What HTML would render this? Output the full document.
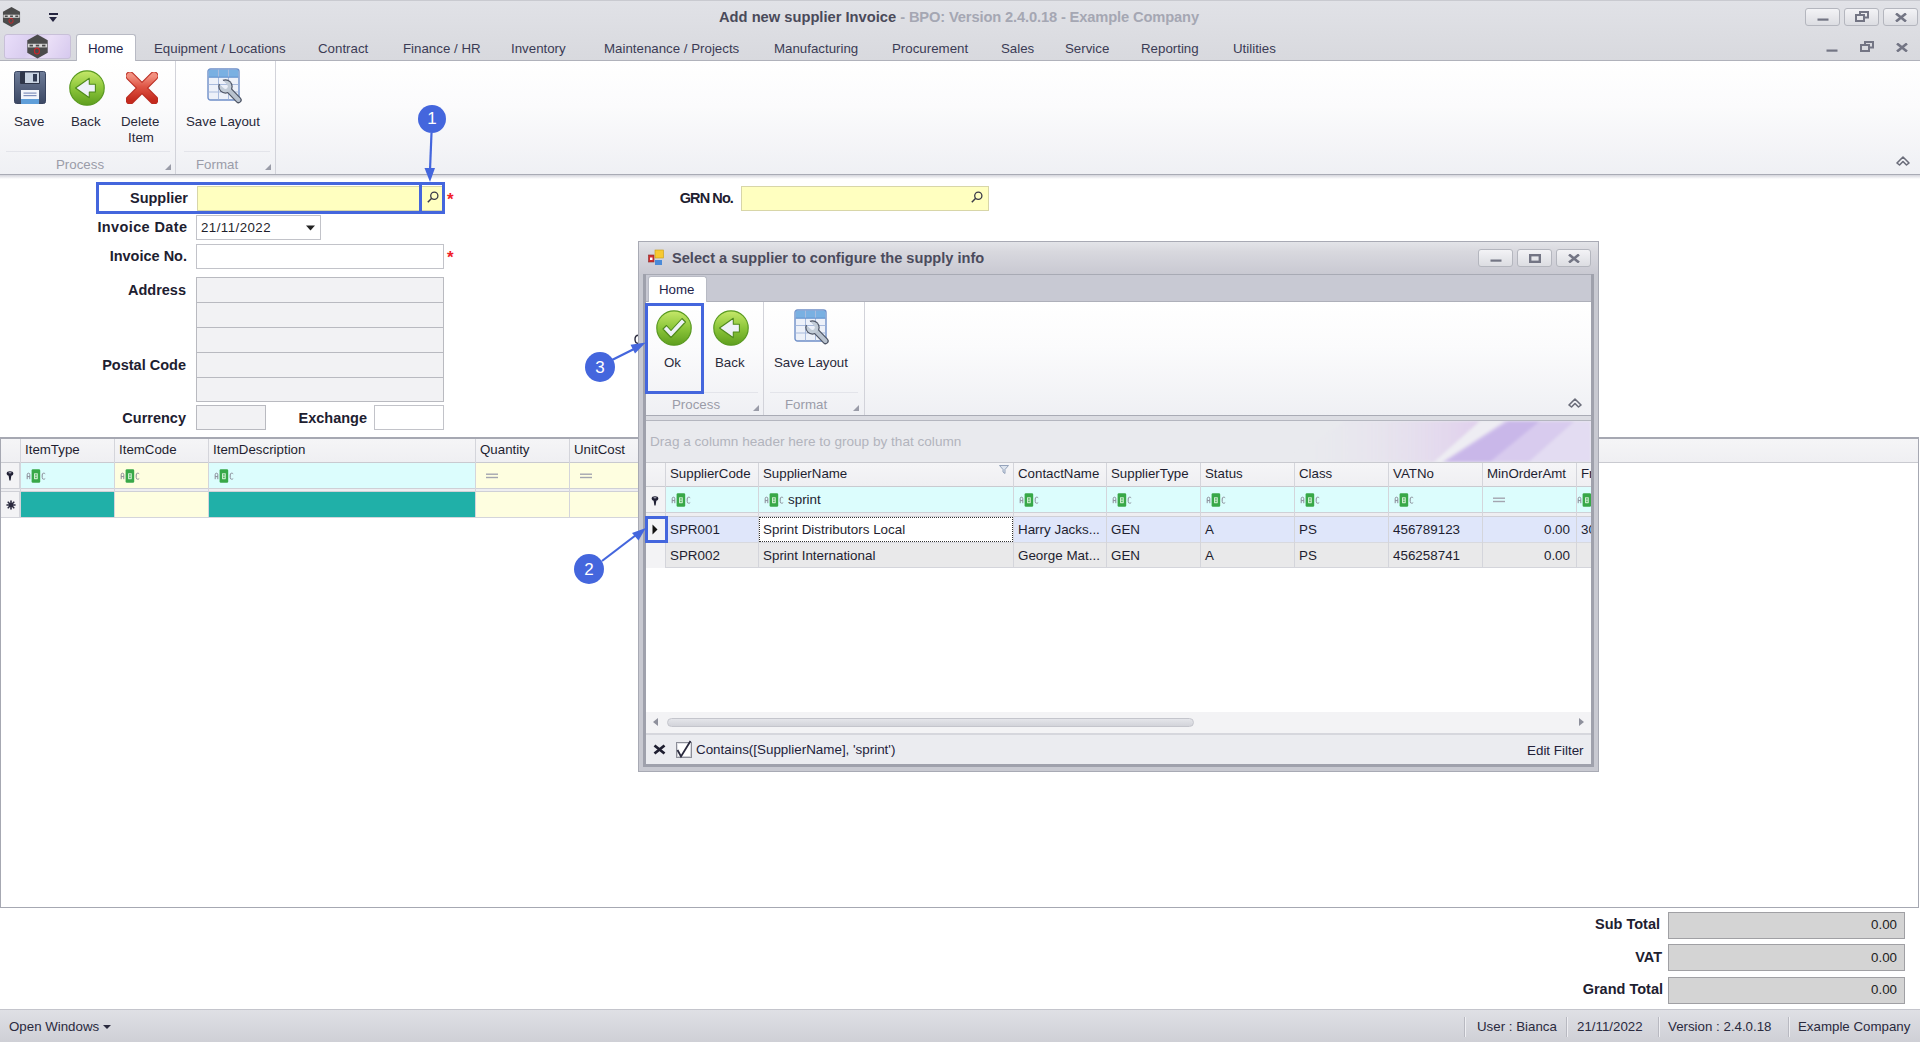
<!DOCTYPE html>
<html><head><meta charset="utf-8">
<style>
*{box-sizing:border-box;margin:0;padding:0}
html,body{width:1920px;height:1042px;overflow:hidden;background:#fff;font-family:"Liberation Sans",sans-serif;color:#1e1e2a}
.a{position:absolute}
.t{position:absolute;white-space:nowrap;line-height:1}
#title{left:0;top:0;width:1920px;height:60px;background:linear-gradient(#e1e2e7,#d8d9de)}
.wb{position:absolute;top:8px;width:35px;height:18px;border:1px solid #b4b6be;border-radius:3px;background:linear-gradient(#f3f3f6,#dcdde2)}
.tab{position:absolute;top:0;font-size:13.3px;color:#3b3b55}
#ribbon{left:0;top:61px;width:1920px;height:113px;background:linear-gradient(#ffffff 0%,#fbfbfc 40%,#eff0f4 100%)}
.rbt{position:absolute;font-size:13.3px;color:#2a2a3a;text-align:center}
.glab{position:absolute;font-size:13.3px;color:#9a9ca8}
.lbl{position:absolute;font-weight:bold;font-size:14.5px;color:#1d2030;text-align:right}
.inp{position:absolute;border:1px solid #c2c3c9;background:#fff}
.inpg{position:absolute;border:1px solid #b9bac0;background:#f2f2f4}
.ast{position:absolute;color:#f0202a;font-size:17px;font-weight:bold}
.tot{left:1668px;width:237px;height:27px;background:#d4d4d4;border:1px solid #a0a0a4}
.totv{right:23px;font-size:13.3px;color:#222}
.sb{font-size:13.3px;color:#2a2a3e}
.sep{position:absolute;top:1017px;width:1px;height:20px;background:#b8b9c1;box-shadow:1px 0 0 #eeeef2}
.gh{font-size:13.3px;color:#1e1e30}
.gc{font-size:13.4px;color:#1e1e30}
</style></head><body>
<svg width="0" height="0" style="position:absolute">
<defs>
  <linearGradient id="gGreen" x1="0" y1="0" x2="0" y2="1"><stop offset="0" stop-color="#c6e86a"/><stop offset="0.5" stop-color="#8cc63a"/><stop offset="1" stop-color="#5e9e1e"/></linearGradient>
  <linearGradient id="gRed" x1="0" y1="0" x2="0" y2="1"><stop offset="0" stop-color="#f29080"/><stop offset="0.45" stop-color="#de5444"/><stop offset="1" stop-color="#c42a1e"/></linearGradient>
  <linearGradient id="gDisk" x1="0" y1="0" x2="0" y2="1"><stop offset="0" stop-color="#6e7c98"/><stop offset="1" stop-color="#3c4864"/></linearGradient>
  <linearGradient id="gHex" x1="0" y1="0" x2="0" y2="1"><stop offset="0" stop-color="#6a6a6a"/><stop offset="1" stop-color="#333"/></linearGradient>
  <symbol id="abc" viewBox="0 0 20 14">
    <path d="M1.2,10.2 V5.6 Q1.2,4.2 2.5,4.2 Q3.8,4.2 3.8,5.6 V10.2 M1.2,7.6 H3.8" fill="none" stroke="#8a8c98" stroke-width="1"/>
    <rect x="5.6" y="0.2" width="8.6" height="13.6" rx="1.3" fill="#38a848"/>
    <rect x="8" y="4.2" width="3.8" height="6" rx="0.4" fill="#cdeccf"/>
    <rect x="9" y="5.2" width="1.8" height="1.5" fill="#5cb868"/>
    <rect x="9" y="7.6" width="1.8" height="1.5" fill="#5cb868"/>
    <path d="M19.2,4.8 Q18.6,4.2 17.6,4.2 Q16.2,4.2 16.2,6 V8.4 Q16.2,10.2 17.6,10.2 Q18.6,10.2 19.2,9.6" fill="none" stroke="#8a8c98" stroke-width="1"/>
  </symbol>
  <symbol id="pin" viewBox="0 0 8 10">
    <ellipse cx="4" cy="2.6" rx="3.3" ry="2.4" fill="#1f1f33"/>
    <ellipse cx="4" cy="1.7" rx="1.6" ry="0.7" fill="#9a9aaa"/>
    <path d="M2.6,4.5 L5.4,4.5 L4.6,9.5 L3.4,9.5 Z" fill="#1f1f33"/>
  </symbol>
  <symbol id="eq" viewBox="0 0 12 6"><rect x="0" y="0.5" width="12" height="1.4" fill="#a3a5b0"/><rect x="0" y="3.8" width="12" height="1.4" fill="#a3a5b0"/></symbol>
  <symbol id="wmin" viewBox="0 0 12 3"><rect x="0.5" y="0.5" width="11" height="2.2" fill="#737584"/></symbol>
  <symbol id="wrest" viewBox="0 0 14 11"><path d="M5,4 V1 H13 V6.5 H9.5" fill="none" stroke="#737584" stroke-width="2"/><rect x="1" y="4" width="8" height="6" fill="none" stroke="#737584" stroke-width="2"/></symbol>
  <symbol id="wclose" viewBox="0 0 12 9"><path d="M1,0.5 L11,8.5 M11,0.5 L1,8.5" stroke="#737584" stroke-width="2.6"/></symbol>
  <symbol id="wmax" viewBox="0 0 12 9"><rect x="1.2" y="1.2" width="9.6" height="6.6" fill="none" stroke="#737584" stroke-width="2.4"/></symbol>
  <symbol id="search" viewBox="0 0 12 12"><circle cx="7.3" cy="4.7" r="3.6" fill="none" stroke="#3a3a48" stroke-width="1.3"/><path d="M4.7,7.3 L0.8,11.2" stroke="#3a3a48" stroke-width="1.5"/></symbol>
  <symbol id="chev" viewBox="0 0 16 12"><path d="M2,9 L8,3 L14,9 L11.5,11 L8,7.5 L4.5,11 Z" fill="none" stroke="#6b6d7a" stroke-width="1.6" stroke-linejoin="round"/></symbol>
  <symbol id="launch" viewBox="0 0 7 7"><path d="M7,0 L7,7 L0,7 Z" fill="#9a9ca8"/></symbol>
  <symbol id="disk" viewBox="0 0 32 33">
    <rect x="0.5" y="0.5" width="31" height="32" rx="2" fill="url(#gDisk)" stroke="#3a4560" stroke-width="1"/>
    <rect x="6" y="0.5" width="20" height="12.5" rx="1" fill="#2e364a"/>
    <rect x="11" y="1.5" width="14" height="10.5" fill="#c9d4e3"/>
    <rect x="19" y="3" width="4" height="7.5" fill="#303a52"/>
    <rect x="7" y="19" width="18" height="14" fill="#f4f6fa"/>
    <rect x="7" y="28" width="18" height="5" fill="#5f9ed9"/>
    <rect x="9.5" y="21.5" width="13" height="1.2" fill="#8090bb"/>
    <rect x="9.5" y="24" width="13" height="1.2" fill="#8090bb"/>
  </symbol>
  <symbol id="back" viewBox="0 0 36 36">
    <circle cx="18" cy="18" r="17.2" fill="url(#gGreen)" stroke="#5a9a22" stroke-width="1.2"/>
    <path d="M6.5,18 L20.3,8.3 V14.2 H26.4 V22 H20.3 V27.8 Z" fill="#eef2f8" stroke="#4f8a1c" stroke-width="1.1" stroke-linejoin="round"/>
  </symbol>
  <symbol id="ok" viewBox="0 0 36 36">
    <circle cx="18" cy="18" r="17.2" fill="url(#gGreen)" stroke="#5a9a22" stroke-width="1.2"/>
    <path d="M7,19 L10.5,15.5 L15,20.5 L26,8.5 L29.5,12 L15,27.5 Z" fill="#eef2f8" stroke="#4f8a1c" stroke-width="1.1" stroke-linejoin="round"/>
  </symbol>
  <symbol id="del" viewBox="0 0 32 32">
    <path d="M4,4 L28,28 M28,4 L4,28" stroke="#b82a20" stroke-width="9" stroke-linecap="round"/>
    <path d="M4,4 L28,28 M28,4 L4,28" stroke="url(#gRed)" stroke-width="7" stroke-linecap="round"/>
  </symbol>
  <symbol id="layout" viewBox="0 0 36 36">
    <rect x="1" y="1" width="31" height="31" rx="2.5" fill="#edf1f9" stroke="#6f8fc8" stroke-width="1.4"/>
    <rect x="1.7" y="1.7" width="29.6" height="7.5" fill="#79b0e2"/>
    <path d="M11.5,1.7 V31.3 M21.5,1.7 V31.3 M1.7,16.5 H31.3 M1.7,24 H31.3" stroke="#a9bbdd" stroke-width="1"/>
    <path d="M1.7,9.2 H31.3" stroke="#5f8fcc" stroke-width="1"/>
    <g mask="url(#wmask)">
      <path d="M18.5,18.5 L31.5,32" stroke="#4f5666" stroke-width="6.4" stroke-linecap="round"/>
      <circle cx="18.5" cy="18.5" r="7.2" fill="#4f5666"/>
      <path d="M18.5,18.5 L31.5,32" stroke="#b9c3cf" stroke-width="4" stroke-linecap="round"/>
      <circle cx="18.5" cy="18.5" r="6" fill="#c2ccd7"/>
    </g>
  </symbol>
  <mask id="wmask" maskUnits="userSpaceOnUse" x="0" y="0" width="36" height="36">
    <rect x="0" y="0" width="36" height="36" fill="#fff"/>
    <path d="M18.5,18.5 L12,12" stroke="#000" stroke-width="4.6" stroke-linecap="round"/>
    <path d="M17.6,17.6 L8,8" stroke="#000" stroke-width="4.6"/>
  </mask>
  <symbol id="hex" viewBox="0 0 20 22">
    <path d="M10,0.5 L19,5.5 V16.5 L10,21.5 L1,16.5 V5.5 Z" fill="url(#hGex)"/>
    <path d="M10,0.5 L19,5.5 V16.5 L10,21.5 L1,16.5 V5.5 Z" fill="#4b4b4b"/>
    <rect x="1.5" y="8.6" width="17" height="3.2" fill="#d8d8d8"/>
    <rect x="3" y="9.4" width="3" height="1.6" fill="#4b4b4b"/><rect x="8.5" y="9.4" width="3" height="1.6" fill="#4b4b4b"/><rect x="14" y="9.4" width="3" height="1.6" fill="#4b4b4b"/>
    <ellipse cx="9.5" cy="15" rx="2.2" ry="2.6" fill="none" stroke="#c8262a" stroke-width="1"/>
  </symbol>
</defs>
</svg>


<!-- title bar + tabs -->
<div id="title" class="a"></div>
<div class="a" style="left:0;top:0;width:1920px;height:1px;background:#c9cad0"></div>
<div class="a" style="left:0;top:60px;width:1920px;height:1px;background:#b0b2bb"></div>

<div class="t" style="left:719px;top:10px;font-size:14.7px;font-weight:bold;color:#4a4a5a">Add new supplier Invoice <span style="color:#a5a7b3;font-weight:bold;letter-spacing:-0.14px">- BPO: Version 2.4.0.18 - Example Company</span></div>

<div class="wb" style="left:1805px"></div>
<div class="wb" style="left:1844px"></div>
<div class="wb" style="left:1883px"></div>

<!-- tab strip -->
<div class="a" style="left:4px;top:34px;width:67px;height:25px;border:1px solid #c8c0d8;border-radius:3px;background:linear-gradient(120deg,#e9defa,#d9cdef 40%,#eadff7 60%,#d6c9ee)"></div>
<div class="a" style="left:76px;top:34px;width:60px;height:27px;background:#fff;border:1px solid #b8bac4;border-bottom:none;border-radius:3px 3px 0 0"></div>
<div class="t tab" style="left:88px;top:42px;color:#23234a">Home</div>
<div class="t tab" style="left:154px;top:42px">Equipment / Locations</div>
<div class="t tab" style="left:318px;top:42px">Contract</div>
<div class="t tab" style="left:403px;top:42px">Finance / HR</div>
<div class="t tab" style="left:511px;top:42px">Inventory</div>
<div class="t tab" style="left:604px;top:42px">Maintenance / Projects</div>
<div class="t tab" style="left:774px;top:42px">Manufacturing</div>
<div class="t tab" style="left:892px;top:42px">Procurement</div>
<div class="t tab" style="left:1001px;top:42px">Sales</div>
<div class="t tab" style="left:1065px;top:42px">Service</div>
<div class="t tab" style="left:1141px;top:42px">Reporting</div>
<div class="t tab" style="left:1233px;top:42px">Utilities</div>

<!-- ribbon -->
<div id="ribbon" class="a"></div>
<div class="a" style="left:0;top:174px;width:1920px;height:1px;background:#a9abb5"></div>
<div class="a" style="left:0;top:175px;width:1920px;height:4px;background:linear-gradient(#d4d5dc,#ffffff)"></div>
<div class="a" style="left:175px;top:61px;width:1px;height:113px;background:#d2d3da"></div>
<div class="a" style="left:275px;top:61px;width:1px;height:113px;background:#d2d3da"></div>
<div class="a" style="left:6px;top:151px;width:164px;height:1px;background:#e3e4ea"></div>
<div class="a" style="left:184px;top:151px;width:86px;height:1px;background:#e3e4ea"></div>

<div class="t rbt" style="left:14px;top:115px">Save</div>
<div class="t rbt" style="left:71px;top:115px">Back</div>
<div class="t rbt" style="left:121px;top:115px">Delete</div>
<div class="t rbt" style="left:128px;top:131px">Item</div>
<div class="t rbt" style="left:186px;top:115px">Save Layout</div>
<div class="t glab" style="left:56px;top:158px">Process</div>
<div class="t glab" style="left:196px;top:158px">Format</div>

<!-- form -->
<div class="t lbl" style="right:1732px;top:191px">Supplier</div>
<div class="t lbl" style="right:1733px;top:220px;letter-spacing:0.38px;margin-right:-0.38px">Invoice Date</div>
<div class="t lbl" style="right:1733px;top:249px">Invoice No.</div>
<div class="t lbl" style="right:1734px;top:283px">Address</div>
<div class="t lbl" style="right:1734px;top:358px">Postal Code</div>
<div class="t lbl" style="right:1734px;top:411px">Currency</div>
<div class="t lbl" style="right:1553px;top:411px">Exchange</div>
<div class="t lbl" style="right:1187px;top:191px;letter-spacing:-0.9px">GRN No.</div>

<div class="inp" style="left:197px;top:186px;width:246px;height:25px;background:#ffffc0;border-color:#d8d6a8"></div>
<div class="inp" style="left:196px;top:215px;width:125px;height:25px"></div>
<div class="t" style="left:201px;top:221px;font-size:13.3px;letter-spacing:0.45px">21/11/2022</div>
<div class="inp" style="left:196px;top:244px;width:248px;height:25px"></div>
<div class="inpg" style="left:196px;top:277px;width:248px;height:26px"></div>
<div class="inpg" style="left:196px;top:302px;width:248px;height:26px"></div>
<div class="inpg" style="left:196px;top:327px;width:248px;height:26px"></div>
<div class="inpg" style="left:196px;top:352px;width:248px;height:26px"></div>
<div class="inpg" style="left:196px;top:377px;width:248px;height:25px"></div>
<div class="inpg" style="left:196px;top:405px;width:70px;height:25px"></div>
<div class="inp" style="left:374px;top:405px;width:70px;height:25px"></div>
<div class="inp" style="left:741px;top:186px;width:248px;height:25px;background:#ffffc0;border-color:#d8d6a8"></div>
<div class="ast" style="left:447px;top:189.5px">*</div>
<div class="ast" style="left:447px;top:247.5px">*</div>


<!-- main grid -->
<div class="a" style="left:0;top:437px;width:1919px;height:471px;border:1px solid #a6a8b2;border-top:2px solid #a6a8b2;background:#fff"></div>
<div class="a" style="left:1px;top:439px;width:1917px;height:24px;background:linear-gradient(#f5f5f7,#efeff2);border-bottom:1px solid #c9cad0"></div>
<div class="a" style="left:1px;top:463px;width:19px;height:25px;background:#f3f3f5;border-right:1px solid #d4d5db"></div>
<div class="a" style="left:1px;top:492px;width:19px;height:26px;background:#f3f3f5;border-right:1px solid #d4d5db"></div>
<div class="a" style="left:1px;top:488px;width:637px;height:4px;background:#eeeef1;border-top:1px solid #cfd0d6;border-bottom:1px solid #cfd0d6"></div>
<div class="a" style="left:1px;top:517px;width:637px;height:1px;background:#d4d5db"></div>
<div class="a" style="left:20px;top:439px;width:1px;height:79px;background:#d4d5db"></div>
<div class="t" style="left:25px;top:443px;font-size:13.3px;color:#1e1e30">ItemType</div>
<div class="a" style="left:21px;top:463px;width:93px;height:25px;background:#dcfdfd"></div>
<div class="a" style="left:21px;top:492px;width:93px;height:25px;background:#20b0a8"></div>
<div class="a" style="left:114px;top:439px;width:1px;height:79px;background:#d4d5db"></div>
<div class="t" style="left:119px;top:443px;font-size:13.3px;color:#1e1e30">ItemCode</div>
<div class="a" style="left:115px;top:463px;width:93px;height:25px;background:#fefee0"></div>
<div class="a" style="left:115px;top:492px;width:93px;height:25px;background:#fefee0"></div>
<div class="a" style="left:208px;top:439px;width:1px;height:79px;background:#d4d5db"></div>
<div class="t" style="left:213px;top:443px;font-size:13.3px;color:#1e1e30">ItemDescription</div>
<div class="a" style="left:209px;top:463px;width:266px;height:25px;background:#dcfdfd"></div>
<div class="a" style="left:209px;top:492px;width:266px;height:25px;background:#20b0a8"></div>
<div class="a" style="left:475px;top:439px;width:1px;height:79px;background:#d4d5db"></div>
<div class="t" style="left:480px;top:443px;font-size:13.3px;color:#1e1e30">Quantity</div>
<div class="a" style="left:476px;top:463px;width:93px;height:25px;background:#fefee0"></div>
<div class="a" style="left:476px;top:492px;width:93px;height:25px;background:#fefee0"></div>
<div class="a" style="left:569px;top:439px;width:1px;height:79px;background:#d4d5db"></div>
<div class="t" style="left:574px;top:443px;font-size:13.3px;color:#1e1e30">UnitCost</div>
<div class="a" style="left:570px;top:463px;width:70px;height:25px;background:#fefee0"></div>
<div class="a" style="left:570px;top:492px;width:70px;height:25px;background:#fefee0"></div>

<!-- totals -->
<div class="t lbl" style="right:260px;top:917px">Sub Total</div>
<div class="t lbl" style="right:258px;top:950px">VAT</div>
<div class="t lbl" style="right:257px;top:982px">Grand Total</div>
<div class="a tot" style="top:912px"></div><div class="t totv" style="top:918px">0.00</div>
<div class="a tot" style="top:944px"></div><div class="t totv" style="top:951px">0.00</div>
<div class="a tot" style="top:977px"></div><div class="t totv" style="top:983px">0.00</div>

<!-- status bar -->
<div class="a" style="left:0;top:1009px;width:1920px;height:33px;background:linear-gradient(#dfe0e5,#cfd0d6);border-top:1px solid #c4c5cc"></div>
<div class="t sb" style="left:9px;top:1020px">Open Windows</div><div class="a" style="left:103px;top:1025px;width:0;height:0;border-left:4px solid transparent;border-right:4px solid transparent;border-top:4px solid #2a2a3e"></div>
<div class="sep" style="left:1464px"></div><div class="sep" style="left:1566px"></div><div class="sep" style="left:1658px"></div><div class="sep" style="left:1788px"></div>
<div class="t sb" style="left:1477px;top:1020px">User : Bianca</div>
<div class="t sb" style="left:1577px;top:1020px">21/11/2022</div>
<div class="t sb" style="left:1668px;top:1020px">Version : 2.4.0.18</div>
<div class="t sb" style="left:1798px;top:1020px">Example Company</div>

<svg class="a" style="left:633px;top:334px" width="6" height="11"><path d="M5.5,1.2 Q2,1.2 2,5.3 Q2,9.5 5.5,9.5" fill="none" stroke="#2a2a3e" stroke-width="1.4"/></svg>
<!-- dialog -->
<div class="a" style="left:638px;top:241px;width:961px;height:531px;background:#c8c9d1;border:1px solid #a8aab4"></div>
<div class="a" style="left:639px;top:242px;width:959px;height:32px;background:linear-gradient(#e3e4e8,#d8d8de 30%,#c9c9d2)"></div>
<div class="t" style="left:672px;top:251px;font-size:14.6px;font-weight:bold;color:#4b4b5c">Select a supplier to configure the supply info</div>
<div class="wb" style="left:1478px;top:249px;width:35px;height:18px"></div>
<div class="wb" style="left:1517px;top:249px;width:35px;height:18px"></div>
<div class="wb" style="left:1556px;top:249px;width:35px;height:18px"></div>
<!-- inner panel -->
<div class="a" style="left:644px;top:274px;width:950px;height:492px;border:1px solid #a8aab4;background:#fff"></div>
<div class="a" style="left:645px;top:275px;width:948px;height:27px;background:#c8c9d3;border-bottom:1px solid #aeb0ba"></div>
<div class="a" style="left:648px;top:276px;width:59px;height:26px;background:#fff;border:1px solid #b8bac4;border-bottom:none;border-radius:3px 3px 0 0"></div>
<div class="t tab" style="left:659px;top:283px;color:#23234a">Home</div>
<div class="a" style="left:645px;top:302px;width:948px;height:113px;background:linear-gradient(#ffffff 0%,#fbfbfc 40%,#eff0f4 100%)"></div>
<div class="a" style="left:763px;top:302px;width:1px;height:113px;background:#d2d3da"></div>
<div class="a" style="left:864px;top:302px;width:1px;height:113px;background:#d2d3da"></div>
<div class="a" style="left:650px;top:392px;width:108px;height:1px;background:#e3e4ea"></div>
<div class="a" style="left:770px;top:392px;width:88px;height:1px;background:#e3e4ea"></div>
<div class="t rbt" style="left:664px;top:356px">Ok</div>
<div class="t rbt" style="left:715px;top:356px">Back</div>
<div class="t rbt" style="left:774px;top:356px">Save Layout</div>
<div class="t glab" style="left:672px;top:398px">Process</div>
<div class="t glab" style="left:785px;top:398px">Format</div>
<div class="a" style="left:645px;top:415px;width:948px;height:1px;background:#a9abb5"></div>
<div class="a" style="left:645px;top:416px;width:948px;height:5px;background:#dcdde3;border-bottom:1px solid #b4b6bf"></div>
<!-- group panel -->
<div class="a" style="left:645px;top:421px;width:946px;height:41px;background:#e9eaee;overflow:hidden">
  <svg width="946" height="41" style="position:absolute;left:0;top:0">
    <defs><filter id="blr" x="-20%" y="-50%" width="140%" height="200%"><feGaussianBlur stdDeviation="1.8"/></filter>
    <linearGradient id="pk" x1="0" y1="0" x2="1" y2="0"><stop offset="0" stop-color="#e9eaee" stop-opacity="0"/><stop offset="1" stop-color="#e0cfed"/></linearGradient></defs>
    <g filter="url(#blr)">
    <path d="M640,41 L790,41 L836,0 L700,0 Z" fill="url(#pk)"/>
    <path d="M789,41 L798,41 L862,0 L835,0 Z" fill="#eeedf3"/>
    <path d="M797,41 L884,41 L930,0 L860,0 Z" fill="#d8cbee"/>
    <path d="M800,41 L845,41 L895,0 L864,0 Z" fill="#c9b7e9"/>
    <path d="M884,41 L946,41 L946,0 L930,0 Z" fill="#e3dcf2"/>
    </g>
  </svg>
</div>
<div class="t" style="left:650px;top:435px;font-size:13.6px;color:#b2b4bd">Drag a column header here to group by that column</div>
<!-- dialog grid -->
<div class="a" style="left:645px;top:462px;width:946px;height:250px;background:#fff;border-top:1px solid #c9cad0"></div>
<div class="a" style="left:645px;top:463px;width:946px;height:24px;background:linear-gradient(#f5f5f7,#efeff2);border-bottom:1px solid #c9cad0"></div>
<div class="a" style="left:645px;top:487px;width:20px;height:25px;background:#f3f3f5"></div>
<div class="a" style="left:645px;top:512px;width:946px;height:5px;background:#eeeef1;border-top:1px solid #cfd0d6;border-bottom:1px solid #cfd0d6"></div>
<div class="a" style="left:645px;top:517px;width:20px;height:51px;background:#f3f3f5"></div>
<div class="a" style="left:665px;top:517px;width:926px;height:25px;background:#dfe6fa"></div>
<div class="a" style="left:665px;top:542px;width:926px;height:26px;background:#e9e9ea;border-top:1px solid #d8d9de;border-bottom:1px solid #d4d5db"></div>
<div class="a" style="left:665px;top:463px;width:1px;height:105px;background:#d4d5db"></div>
<div class="t gh" style="left:670px;top:467px">SupplierCode</div>
<div class="a" style="left:666px;top:487px;width:92px;height:25px;background:#dcfdfd"></div>
<div class="t gc" style="left:670px;top:523px">SPR001</div>
<div class="t gc" style="left:670px;top:549px">SPR002</div>
<div class="a" style="left:758px;top:463px;width:1px;height:105px;background:#d4d5db"></div>
<div class="t gh" style="left:763px;top:467px">SupplierName</div>
<div class="a" style="left:759px;top:487px;width:254px;height:25px;background:#dcfdfd"></div>
<div class="t gc" style="left:763px;top:523px">Sprint Distributors Local</div>
<div class="t gc" style="left:763px;top:549px">Sprint International</div>
<div class="a" style="left:1013px;top:463px;width:1px;height:105px;background:#d4d5db"></div>
<div class="t gh" style="left:1018px;top:467px">ContactName</div>
<div class="a" style="left:1014px;top:487px;width:92px;height:25px;background:#dcfdfd"></div>
<div class="t gc" style="left:1018px;top:523px">Harry Jacks...</div>
<div class="t gc" style="left:1018px;top:549px">George Mat...</div>
<div class="a" style="left:1106px;top:463px;width:1px;height:105px;background:#d4d5db"></div>
<div class="t gh" style="left:1111px;top:467px">SupplierType</div>
<div class="a" style="left:1107px;top:487px;width:93px;height:25px;background:#dcfdfd"></div>
<div class="t gc" style="left:1111px;top:523px">GEN</div>
<div class="t gc" style="left:1111px;top:549px">GEN</div>
<div class="a" style="left:1200px;top:463px;width:1px;height:105px;background:#d4d5db"></div>
<div class="t gh" style="left:1205px;top:467px">Status</div>
<div class="a" style="left:1201px;top:487px;width:93px;height:25px;background:#dcfdfd"></div>
<div class="t gc" style="left:1205px;top:523px">A</div>
<div class="t gc" style="left:1205px;top:549px">A</div>
<div class="a" style="left:1294px;top:463px;width:1px;height:105px;background:#d4d5db"></div>
<div class="t gh" style="left:1299px;top:467px">Class</div>
<div class="a" style="left:1295px;top:487px;width:93px;height:25px;background:#dcfdfd"></div>
<div class="t gc" style="left:1299px;top:523px">PS</div>
<div class="t gc" style="left:1299px;top:549px">PS</div>
<div class="a" style="left:1388px;top:463px;width:1px;height:105px;background:#d4d5db"></div>
<div class="t gh" style="left:1393px;top:467px">VATNo</div>
<div class="a" style="left:1389px;top:487px;width:93px;height:25px;background:#dcfdfd"></div>
<div class="t gc" style="left:1393px;top:523px">456789123</div>
<div class="t gc" style="left:1393px;top:549px">456258741</div>
<div class="a" style="left:1482px;top:463px;width:1px;height:105px;background:#d4d5db"></div>
<div class="t gh" style="left:1487px;top:467px">MinOrderAmt</div>
<div class="a" style="left:1483px;top:487px;width:93px;height:25px;background:#dcfdfd"></div>
<div class="t gc" style="right:350px;top:523px">0.00</div>
<div class="t gc" style="right:350px;top:549px">0.00</div>
<div class="a" style="left:1576px;top:463px;width:1px;height:105px;background:#d4d5db"></div>
<div class="t gh" style="left:1581px;top:467px">Fr</div>
<div class="a" style="left:1577px;top:487px;width:14px;height:25px;background:#dcfdfd"></div>
<div class="a" style="left:1577px;top:517px;width:14px;height:25px;overflow:hidden"><div class="t gc" style="left:4px;top:6px">30</div></div>
<div class="t gc" style="left:1581px;top:549px"></div>

<div class="a" style="left:759px;top:517px;width:254px;height:25px;background:#fff;border:1px dotted #333"></div>
<div class="t gc" style="left:763px;top:523px">Sprint Distributors Local</div>
<div class="t gc" style="left:788px;top:493px">sprint</div>
<!-- scrollbar -->
<div class="a" style="left:646px;top:712px;width:945px;height:21px;background:#f3f3f5"></div>
<div class="a" style="left:667px;top:718px;width:527px;height:9px;border-radius:5px;background:linear-gradient(#e4e5ea,#d3d4da);border:1px solid #c4c5cc"></div>
<div class="a" style="left:653px;top:718px;width:0;height:0;border-top:4.5px solid transparent;border-bottom:4.5px solid transparent;border-right:5px solid #8e909c"></div>
<div class="a" style="left:1579px;top:718px;width:0;height:0;border-top:4.5px solid transparent;border-bottom:4.5px solid transparent;border-left:5px solid #8e909c"></div>
<div class="a" style="left:646px;top:733px;width:945px;height:2px;background:#d6d7dd"></div>
<div class="a" style="left:646px;top:735px;width:945px;height:30px;background:#ebecf0"></div>
<div class="t" style="left:696px;top:743px;font-size:13.4px;color:#22223a">Contains([SupplierName], 'sprint')</div>
<div class="t" style="left:1527px;top:744px;font-size:13.4px;color:#22223a">Edit Filter</div>

<!-- icons main -->
<svg class="a" style="left:2px;top:6px" width="19" height="22"><use href="#hex"/></svg>
<div class="a" style="left:49px;top:13px;width:9px;height:2px;background:#252540"></div>
<div class="a" style="left:49px;top:16.5px;width:0;height:0;border-left:4.5px solid transparent;border-right:4.5px solid transparent;border-top:5px solid #252540"></div>
<svg class="a" style="left:26px;top:34px" width="23" height="25"><use href="#hex"/></svg>
<svg class="a" style="left:1817px;top:18px" width="12" height="3"><use href="#wmin"/></svg>
<svg class="a" style="left:1855px;top:11px" width="14" height="11"><use href="#wrest"/></svg>
<svg class="a" style="left:1894.5px;top:12.5px" width="12" height="9"><use href="#wclose"/></svg>
<svg class="a" style="left:1826px;top:48.5px" width="12" height="3"><use href="#wmin"/></svg>
<svg class="a" style="left:1860px;top:41px" width="14" height="11"><use href="#wrest"/></svg>
<svg class="a" style="left:1896px;top:42.5px" width="12" height="9"><use href="#wclose"/></svg>
<svg class="a" style="left:14px;top:71px" width="32" height="33"><use href="#disk"/></svg>
<svg class="a" style="left:68.5px;top:69.5px" width="36" height="36"><use href="#back"/></svg>
<svg class="a" style="left:126px;top:71.5px" width="32" height="32"><use href="#del"/></svg>
<svg class="a" style="left:206.5px;top:68px" width="36" height="36"><use href="#layout"/></svg>
<svg class="a" style="left:165px;top:164px" width="6" height="6"><use href="#launch"/></svg>
<svg class="a" style="left:265px;top:164px" width="6" height="6"><use href="#launch"/></svg>
<svg class="a" style="left:1894.5px;top:154px" width="16" height="12"><use href="#chev"/></svg>
<svg class="a" style="left:427px;top:191px" width="12" height="12"><use href="#search"/></svg>
<svg class="a" style="left:971px;top:191px" width="12" height="12"><use href="#search"/></svg>
<svg class="a" style="left:305px;top:225px" width="12" height="6"><path d="M1,0.5 H10 L5.5,5.5 Z" fill="#222"/></svg>
<!-- main grid icons -->
<svg class="a" style="left:6px;top:471px" width="8" height="10"><use href="#pin"/></svg>
<svg class="a" style="left:26px;top:469px" width="20" height="14"><use href="#abc"/></svg>
<svg class="a" style="left:120px;top:469px" width="20" height="14"><use href="#abc"/></svg>
<svg class="a" style="left:214px;top:469px" width="20" height="14"><use href="#abc"/></svg>
<svg class="a" style="left:486px;top:473px" width="12" height="6"><use href="#eq"/></svg>
<svg class="a" style="left:580px;top:473px" width="12" height="6"><use href="#eq"/></svg>
<svg class="a" style="left:5.5px;top:500px" width="10" height="10" viewBox="0 0 10 10"><g stroke="#2a2a3e" stroke-width="1.6" stroke-linecap="round"><path d="M5,1 V9 M1,5 H9 M2.2,2.2 L7.8,7.8 M7.8,2.2 L2.2,7.8"/></g><circle cx="5" cy="5" r="1.6" fill="#2a2a3e"/></svg>
<!-- dialog icons -->
<svg class="a" style="left:648px;top:249px" width="17" height="17"><rect x="0.5" y="6" width="5.5" height="7" fill="#d03030" stroke="#8a2a2a" stroke-width="0.6"/><rect x="2" y="8.5" width="2.5" height="2.5" fill="#fff"/><rect x="7" y="1" width="8.5" height="8" fill="#f7c930" stroke="#c89a10" stroke-width="0.6"/><rect x="7" y="11" width="7" height="5" fill="#4a8ad8"/></svg>
<svg class="a" style="left:1490px;top:258.5px" width="12" height="3"><use href="#wmin"/></svg>
<svg class="a" style="left:1529px;top:253.5px" width="12" height="9"><use href="#wmax"/></svg>
<svg class="a" style="left:1567.5px;top:253.5px" width="12" height="9"><use href="#wclose"/></svg>
<svg class="a" style="left:655.5px;top:310px" width="36" height="36"><use href="#ok"/></svg>
<svg class="a" style="left:712.5px;top:310px" width="36" height="36"><use href="#back"/></svg>
<svg class="a" style="left:794px;top:309px" width="36" height="36"><use href="#layout"/></svg>
<svg class="a" style="left:753px;top:405px" width="6" height="6"><use href="#launch"/></svg>
<svg class="a" style="left:853px;top:405px" width="6" height="6"><use href="#launch"/></svg>
<svg class="a" style="left:1567px;top:396px" width="16" height="12"><use href="#chev"/></svg>
<svg class="a" style="left:651px;top:495.5px" width="8" height="10"><use href="#pin"/></svg>
<svg class="a" style="left:671px;top:493px" width="20" height="14"><use href="#abc"/></svg>
<svg class="a" style="left:764px;top:493px" width="20" height="14"><use href="#abc"/></svg>
<svg class="a" style="left:1019px;top:493px" width="20" height="14"><use href="#abc"/></svg>
<svg class="a" style="left:1112px;top:493px" width="20" height="14"><use href="#abc"/></svg>
<svg class="a" style="left:1206px;top:493px" width="20" height="14"><use href="#abc"/></svg>
<svg class="a" style="left:1300px;top:493px" width="20" height="14"><use href="#abc"/></svg>
<svg class="a" style="left:1394px;top:493px" width="20" height="14"><use href="#abc"/></svg>
<svg class="a" style="left:1577px;top:493px" width="14" height="14" viewBox="0 0 14 14"><use href="#abc" width="20" height="14"/></svg>
<svg class="a" style="left:1493px;top:497px" width="12" height="6"><use href="#eq"/></svg>
<svg class="a" style="left:999px;top:465px" width="10" height="10"><path d="M0.5,0.5 H9.5 L6,4.5 V8.5 L4,7 V4.5 Z" fill="#dde4ee" stroke="#8b9bb4" stroke-width="0.9"/></svg>
<svg class="a" style="left:652px;top:524px" width="6" height="11"><path d="M0.5,0.5 L5.5,5.5 L0.5,10.5 Z" fill="#111"/></svg>
<svg class="a" style="left:653px;top:744px" width="13" height="11"><path d="M1.5,1.5 L11.5,9.5 M11.5,1.5 L1.5,9.5" stroke="#1e1e30" stroke-width="2.8"/></svg>
<div class="a" style="left:676px;top:742px;width:16px;height:16px;border:1px solid #8c8e98;background:linear-gradient(#e4e5ea,#cfd0d6)"></div>
<div class="a" style="left:678px;top:744px;width:12px;height:12px;background:#fff"></div>
<svg class="a" style="left:675px;top:740px" width="18" height="19"><path d="M2.5,10 L6,16.5 L15.5,1" fill="none" stroke="#2a2a3e" stroke-width="1.8"/></svg>

<!-- dialog frame thick inner line -->
<div class="a" style="left:643px;top:274px;width:3px;height:492px;background:#9fa1ac"></div>
<div class="a" style="left:1591px;top:274px;width:3px;height:492px;background:#9fa1ac"></div>
<div class="a" style="left:643px;top:764px;width:951px;height:3px;background:#9fa1ac"></div>
<!-- annotations -->
<div class="a" style="left:96px;top:182px;width:349px;height:32px;border:3px solid #4466dd"></div>
<div class="a" style="left:419px;top:182px;width:26px;height:32px;border:3px solid #4466dd"></div>
<div class="a" style="left:645px;top:302.5px;width:59px;height:91px;border:3px solid #4466dd"></div>
<div class="a" style="left:644.5px;top:516px;width:23px;height:26.5px;border:3px solid #4466dd"></div>
<svg class="a" style="left:0;top:0" width="1920" height="1042" viewBox="0 0 1920 1042">
  <g fill="#4466dd" stroke="none">
    <circle cx="432" cy="119" r="14"/>
    <circle cx="600" cy="367" r="15"/>
    <circle cx="589" cy="569" r="15"/>
    <path d="M424.5,168 L435,168 L430,182 Z"/>
    <path d="M632,533 L638.5,540.5 L645.8,528 Z"/>
    <path d="M630.5,344.8 L635,353.5 L645.8,342.6 Z"/>
  </g>
  <g stroke="#4466dd" stroke-width="2.2" fill="none">
    <path d="M431.5,133 L430,170"/>
    <path d="M602,561 L636,535"/>
    <path d="M612,360 L634,349"/>
  </g>
</svg>
<div class="t" style="left:425px;top:110px;font-size:17px;color:#fff;width:14px;text-align:center">1</div>
<div class="t" style="left:593px;top:358.5px;font-size:17px;color:#fff;width:14px;text-align:center">3</div>
<div class="t" style="left:582px;top:560.5px;font-size:17px;color:#fff;width:14px;text-align:center">2</div>
</body></html>
